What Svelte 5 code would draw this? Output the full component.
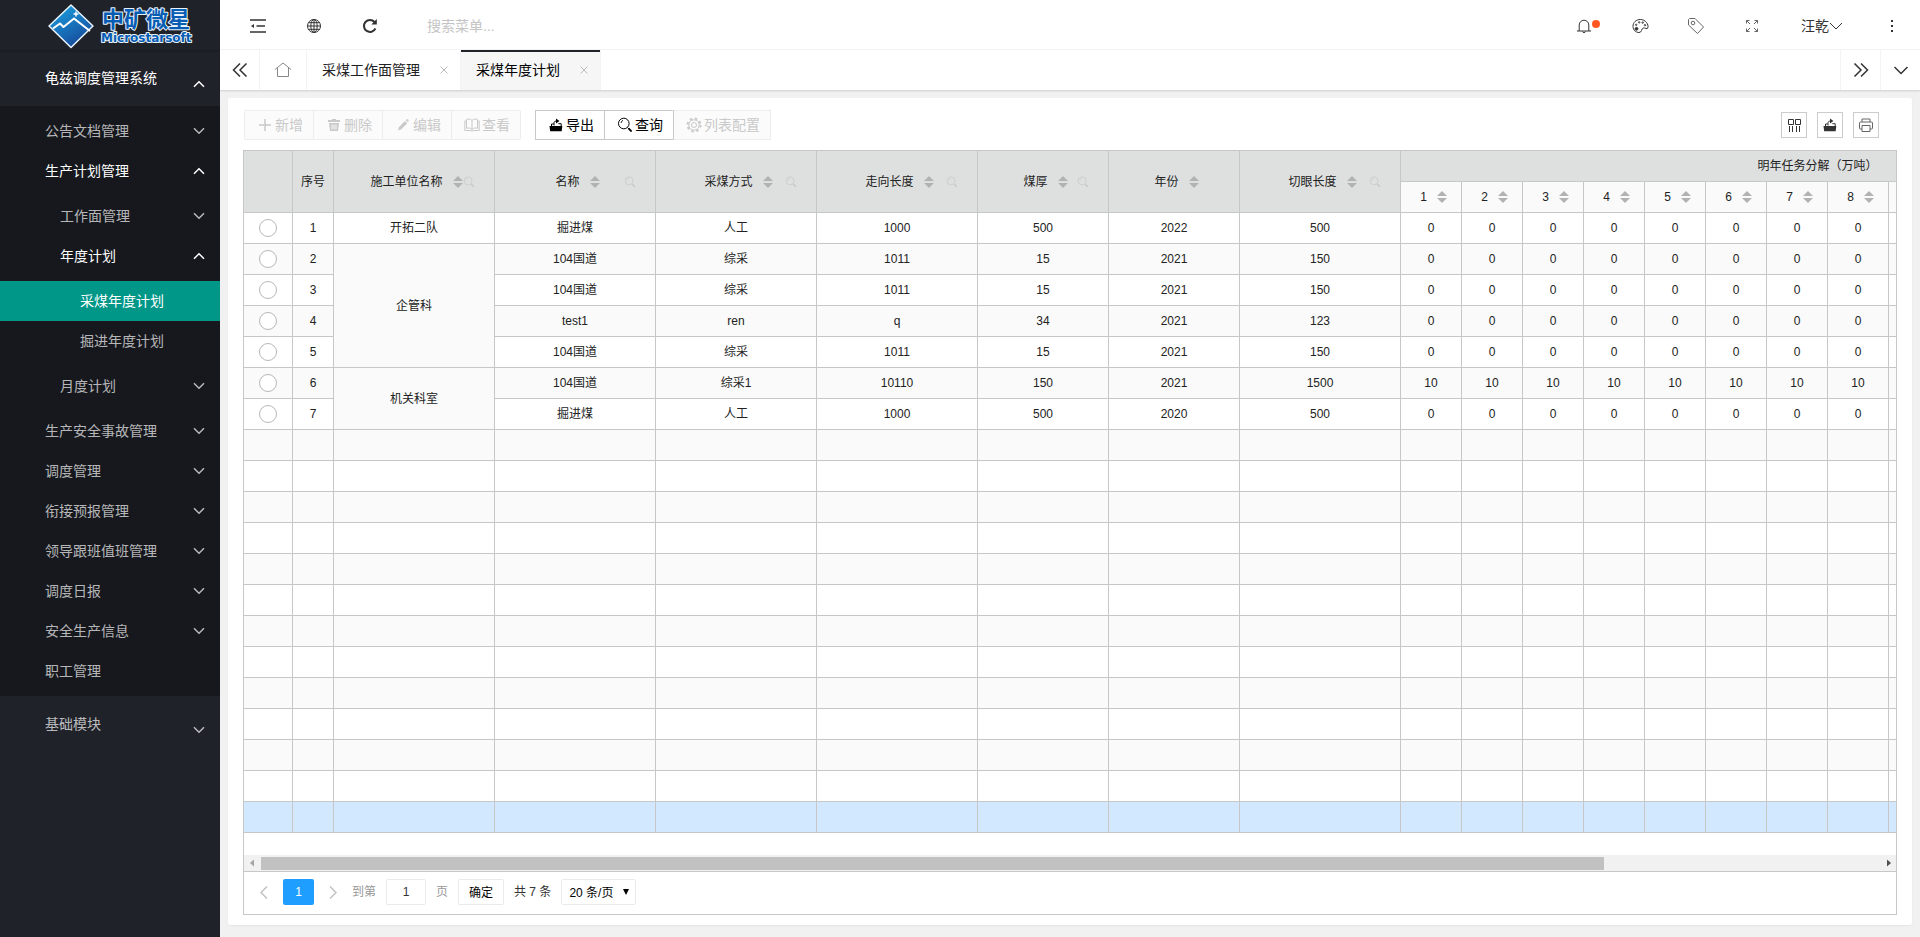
<script>
  const menu = [
    { label: '公告文档管理', state: 'closed' },
    {
      label: '生产计划管理', state: 'open', children: [
        { label: '工作面管理', state: 'closed' },
        {
          label: '年度计划', state: 'open', children: [
            { label: '采煤年度计划', state: 'leaf', active: true },
            { label: '掘进年度计划', state: 'leaf' }
          ]
        },
        { label: '月度计划', state: 'closed' }
      ]
    },
    { label: '生产安全事故管理', state: 'closed' },
    { label: '调度管理', state: 'closed' },
    { label: '衔接预报管理', state: 'closed' },
    { label: '领导跟班值班管理', state: 'closed' },
    { label: '调度日报', state: 'closed' },
    { label: '安全生产信息', state: 'closed' },
    { label: '职工管理', state: 'leaf' }
  ];

  const headers = [
    { label: '施工单位名称', search: true },
    { label: '名称', search: true },
    { label: '采煤方式', search: true },
    { label: '走向长度', search: true },
    { label: '煤厚', search: true },
    { label: '年份', search: false },
    { label: '切眼长度', search: true }
  ];
  const widths = [49, 41, 161, 161, 161, 161, 131, 131, 161, ...Array(12).fill(61), 102];
  const months = Array.from({ length: 12 }, (_, i) => i + 1);

  const rows = [
    { unit: '开拓二队', span: 1, cells: ['掘进煤', '人工', '1000', '500', '2022', '500'], plan: 0 },
    { unit: '企管科', span: 4, cells: ['104国道', '综采', '1011', '15', '2021', '150'], plan: 0 },
    { cells: ['104国道', '综采', '1011', '15', '2021', '150'], plan: 0 },
    { cells: ['test1', 'ren', 'q', '34', '2021', '123'], plan: 0 },
    { cells: ['104国道', '综采', '1011', '15', '2021', '150'], plan: 0 },
    { unit: '机关科室', span: 2, cells: ['104国道', '综采1', '10110', '150', '2021', '1500'], plan: 10 },
    { cells: ['掘进煤', '人工', '1000', '500', '2020', '500'], plan: 0 }
  ];
  const blanks = Array.from({ length: 13 }, (_, i) => i);
</script>

{#snippet chevron(up)}
  <svg class="chev" class:up width="12" height="8" viewBox="0 0 12 8"><path d="M1 1.2l5 5 5-5" /></svg>
{/snippet}

{#snippet items(list, level)}
  <ul class="sub">
    {#each list as item}
      <li>
        <a href="#menu" class="level{level}" class:open={item.state === 'open'} class:active={item.active}>
          <span>{item.label}</span>
          {#if item.state !== 'leaf'}{@render chevron(item.state === 'open')}{/if}
        </a>
        {#if item.children}{@render items(item.children, level + 1)}{/if}
      </li>
    {/each}
  </ul>
{/snippet}

{#snippet sorter()}
  <button class="sort" aria-label="排序"><i class="asc"></i><i class="desc"></i></button>
{/snippet}

{#snippet lens(size)}
  <svg class="line" width={size} height={size} viewBox="0 0 16 16"><circle cx="6.8" cy="6.5" r="5.3" /><path d="M4.2 5.8c0-1.200.700-2 1.800-2.300M10.600 10.600l3.800 4" /><path d="M11.600 11.400l2.800 3" stroke-width="1.8" /></svg>
{/snippet}

{#snippet exporter()}
  <svg width="14" height="14" viewBox="0 0 14 14"><path d="M.5 8h12.800l-.6 5.200H1.200z" fill="currentColor" /><path d="M2.500 8V6h2.300M9.300 5.700h2.900V8M5 7.500V5.200c0-1.500.8-2.200 3-2.200" fill="none" stroke="currentColor" /><path d="M7 .5l3.400 2.600L7 5.500z" fill="currentColor" /></svg>
{/snippet}

<div class="app">
  <aside>
    <a class="logo" href="#home" aria-label="中矿微星">
      <svg width="158" height="49" viewBox="0 0 158 49">
        <defs>
          <linearGradient id="gem" x1="0" y1="0" x2="0.6" y2="1">
            <stop offset="0" stop-color="#1ba6e4" /><stop offset="1" stop-color="#164b9c" />
          </linearGradient>
        </defs>
        <path d="M32 5L54 26 32 47.500 10 26z" fill="url(#gem)" stroke="#e9f4fb" stroke-width="1.500" stroke-linejoin="round" />
        <path d="M14 28.500l7-5 3.500 3.500L35 18.500l16 12.500" fill="none" stroke="#fff" stroke-width="2" stroke-linejoin="round" />
        <path d="M37 11.500v5M34.500 14h5" stroke="#fff" stroke-width="1.500" />
        <text x="63" y="27" class="brand">中矿微星</text>
        <text x="62" y="42" class="brand-en">Microstarsoft</text>
      </svg>
    </a>
    <nav>
      <a href="#menu" class="root open"><span>龟兹调度管理系统</span>{@render chevron(true)}</a>
      {@render items(menu, 1)}
      <a href="#menu" class="root"><span>基础模块</span>{@render chevron(false)}</a>
    </nav>
  </aside>

  <div class="page">
    <header>
      <button aria-label="收起菜单"><svg class="line mid" width="16" height="14" viewBox="0 0 16 14"><path d="M0 1h16M6.500 7H15M0 13h16" /><path d="M1 7l3-2v4z" fill="currentColor" stroke="none" /></svg></button>
      <button aria-label="网站"><svg class="line" width="16" height="16" viewBox="0 0 16 16"><circle cx="8" cy="8" r="6.500" /><ellipse cx="8" cy="8" rx="3.200" ry="6.500" /><path d="M8 1.500v13M1.500 8h13M2.500 4.700h11M2.500 11.300h11" /></svg></button>
      <button aria-label="刷新"><svg class="line bold" width="16" height="16" viewBox="0 0 16 16"><path d="M13.400 10.500A6 6 0 1 1 12.500 4" /><path d="M14.800 1v5.500H9.300z" fill="currentColor" stroke="none" /></svg></button>
      <input class="menu-search" type="text" placeholder="搜索菜单..." aria-label="搜索菜单" />
      <span class="grow"></span>
      <button class="bell" aria-label="消息"><svg class="line" width="16" height="16" viewBox="0 0 16 16"><path d="M1 13h14M3.200 13V7a4.800 4.800 0 0 1 9.600 0v6M6.500 13.500c.3 1.500 2.700 1.500 3 0" /></svg><i></i></button>
      <button aria-label="主题"><svg class="line" width="17" height="16" viewBox="0 0 17 16"><path d="M8.500 1.500C4 1.500 1 4.500 1 8.400 1 12 3.800 14.500 7 14.500c3.200 0 2-3.700 4.300-4.500 1.800-.6 3.700 1.800 4.500 0C17 6.500 13.500 1.500 8.500 1.500z" /><circle cx="4.500" cy="10.800" r="1.400" fill="currentColor" /><circle cx="4.200" cy="6.800" r=".7" /><circle cx="7.200" cy="4.400" r=".7" /><circle cx="10.700" cy="4.600" r=".7" /><circle cx="13" cy="7.200" r=".7" /></svg></button>
      <button class="soft" aria-label="便签"><svg class="line" width="18" height="18" viewBox="0 0 18 18"><path d="M1.500 2.500l1-1H8l8.500 8.500-6 6.500-9-8.500z" /><circle cx="6" cy="6" r="1.800" /></svg></button>
      <button class="soft" aria-label="全屏"><svg class="line" width="14" height="14" viewBox="0 0 14 14"><path d="M1.500 4.500v-3h3M1.500 1.500l3.500 3.500M9.500 1.500h3v3M12.500 1.500L9 5M1.500 9.500v3h3M1.500 12.500L5 9M9.500 12.500h3v-3M12.500 12.500L9 9" /></svg></button>
      <button class="user">汪乾<svg class="line" width="14" height="8" viewBox="0 0 14 8"><path d="M1 1l6 6 6-6" /></svg></button>
      <button aria-label="更多"><svg width="4" height="14" viewBox="0 0 4 14"><path d="M1 1h2v2H1zM1 6h2v2H1zM1 11h2v2H1z" fill="currentColor" /></svg></button>
    </header>

    <div class="tabs">
      <button class="arrow" aria-label="向左"><svg class="line mid" width="16" height="14" viewBox="0 0 16 14"><path d="M8 .5L1.500 7 8 13.500M14.500 .5L8 7l6.500 6.500" /></svg></button>
      <a class="home" href="#home" aria-label="主页"><svg class="line" width="18" height="16" viewBox="0 0 18 16"><path d="M1 7.500L9 1l8 6.500M3.500 6v8.500h11V6" /></svg></a>
      <a class="tab" href="#face">采煤工作面管理<svg class="line" width="8" height="8" viewBox="0 0 8 8"><path d="M.5 .5l7 7M7.500 .5l-7 7" /></svg></a>
      <a class="tab current" href="#year">采煤年度计划<svg class="line" width="8" height="8" viewBox="0 0 8 8"><path d="M.5 .5l7 7M7.500 .5l-7 7" /></svg></a>
      <span class="grow"></span>
      <button class="arrow edge" aria-label="向右"><svg class="line mid" width="16" height="14" viewBox="0 0 16 14"><path d="M1.500 .5L8 7l-6.500 6.500M8 .5L14.500 7 8 13.500" /></svg></button>
      <button class="arrow edge" aria-label="标签操作"><svg class="line mid" width="14" height="9" viewBox="0 0 14 9"><path d="M.5 1L7 7.500 13.500 1" /></svg></button>
    </div>

    <main>
      <div class="toolbar">
        <div class="group">
          <button class="tool" disabled><svg class="line mid" width="14" height="14" viewBox="0 0 14 14"><path d="M7 1v12M1 7h12" /></svg>新增</button>
          <button class="tool" disabled><svg width="14" height="14" viewBox="0 0 14 14"><path d="M5 1h4v1h4v2H1V2h4zM2 5h10l-1 8H3z" fill="currentColor" /><path d="M5 6.500v5M7 6.500v5M9 6.500v5" stroke="#fbfbfb" /></svg>删除</button>
          <button class="tool" disabled><svg width="14" height="14" viewBox="0 0 14 14"><path d="M2 12.500l1-3.500 6-6 2.300 2.300-6 6zM9.700 2.300l1-1q.8-.4 1.500.3t.4 1.500l-.8 1z" fill="currentColor" /></svg>编辑</button>
          <button class="tool" disabled><svg class="line" width="16" height="14" viewBox="0 0 16 14"><path d="M8 2.500C6.500.8 4 .8 2.500 1.500v8.800c1.800-.6 4-.4 5.500 1 1.500-1.400 3.700-1.600 5.500-1V1.500C12 .8 9.500.8 8 2.500v8.800M2.500 3H.8v9.500H7l1 .8 1-.8h6.200V3h-1.700" /></svg>查看</button>
        </div>
        <div class="group">
          <button class="tool">{@render exporter()}导出</button>
          <button class="tool">{@render lens(16)}查询</button>
          <button class="tool wide" disabled><svg class="line" width="16" height="16" viewBox="0 0 16 16"><circle cx="8" cy="8" r="2.500" /><circle cx="8" cy="8" r="5.200" /><circle cx="8" cy="8" r="6.500" stroke-width="2" stroke-dasharray="2.500 2.600" /></svg>列表配置</button>
        </div>
        <span class="grow"></span>
        <div class="mini">
          <button aria-label="筛选列"><svg class="line" width="14" height="14" viewBox="0 0 14 14"><path d="M1.500 1.500h5v5h-5zM8.500 1.500h5v5h-5zM2.500 8v6M5.500 8v6M9.500 8v6M12.500 8v6" /></svg></button>
          <button aria-label="导出">{@render exporter()}</button>
          <button class="soft" aria-label="打印"><svg class="line" width="14" height="14" viewBox="0 0 14 14"><path d="M3 4V1h8v3M3 11H1.500q-1 0-1-1V5q0-1 1-1h11q1 0 1 1v5q0 1-1 1H11M3 7.500h8v6H3z" /></svg></button>
        </div>
      </div>

      <div class="grid">
        <div class="scroll">
          <table>
            <colgroup>{#each widths as w}<col style="width:{w}px" />{/each}</colgroup>
            <thead>
              <tr>
                <th rowspan="2"></th>
                <th rowspan="2">序号</th>
                {#each headers as h}
                  <th rowspan="2">
                    <div class="head"><span>{h.label}</span>{@render sorter()}
                      {#if h.search}<button class="find" aria-label="搜索{h.label}">{@render lens(12)}</button>{/if}
                    </div>
                  </th>
                {/each}
                <th colspan="13">明年任务分解（万吨）</th>
              </tr>
              <tr class="months">
                {#each months as m}<th><div class="head"><span>{m}</span>{@render sorter()}</div></th>{/each}
                <th></th>
              </tr>
            </thead>
            <tbody>
              {#each rows as row, i}
                <tr>
                  <td><input type="radio" name="plan" aria-label="选择第{i + 1}行" /></td>
                  <td>{i + 1}</td>
                  {#if row.unit}<td rowspan={row.span}>{row.unit}</td>{/if}
                  {#each row.cells as c}<td>{c}</td>{/each}
                  {#each months as m}<td>{row.plan}</td>{/each}
                  <td></td>
                </tr>
              {/each}
              {#each blanks as b}
                <tr class:selected={b === blanks.length - 1}>{#each widths as w}<td></td>{/each}</tr>
              {/each}
            </tbody>
          </table>
        </div>
        <div class="hbar">
          <svg width="17" height="16" viewBox="0 0 17 16"><path d="M10 4.500v7L6 8z" fill="#a3a3a3" /></svg>
          <div class="track"><i></i></div>
          <svg width="17" height="16" viewBox="0 0 17 16"><path d="M8 4.500v7L12 8z" fill="#505050" /></svg>
        </div>
        <div class="pager">
          <button class="step" aria-label="上一页"><svg class="line mid" width="8" height="13" viewBox="0 0 8 13"><path d="M7 .5l-6 6 6 6" /></svg></button>
          <button class="num">1</button>
          <button class="step" aria-label="下一页"><svg class="line mid" width="8" height="13" viewBox="0 0 8 13"><path d="M1 .5l6 6-6 6" /></svg></button>
          <label class="jump">到第<input type="text" value="1" />页</label>
          <button class="ok">确定</button>
          <span class="total">共 7 条</span>
          <div class="size">
            <select aria-label="每页条数"><option>20 条/页</option></select>
            <svg width="8" height="8" viewBox="0 0 8 8"><path d="M1 1h6L4 7z" fill="#000" /></svg>
          </div>
        </div>
      </div>
    </main>
  </div>
</div>

<style>
  :global(body) { margin: 0; background: #f1f1f1; }
  .app {
    display: flex; min-height: 100vh; color: #333;
    font: 14px/20px "Liberation Sans", "Noto Sans CJK SC", sans-serif;
  }
  * { box-sizing: border-box; }
  a { color: inherit; text-decoration: none; }
  button, input, select { font: inherit; color: inherit; margin: 0; padding: 0; border: 0; background: none; outline: 0; }
  ul { list-style: none; margin: 0; padding: 0; }
  svg { flex: none; display: block; }
  .grow { flex: 1; }
  .line { fill: none; stroke: currentColor; stroke-width: 1; }
  .line.bold { stroke-width: 2; }
  .line.mid { stroke-width: 1.5; }

  aside { flex: none; width: 220px; background: #20222a; color: rgba(255, 255, 255, .7); }
  .logo { display: flex; height: 50px; padding-left: 39px; box-shadow: 0 1px 2px rgba(0, 0, 0, .25); }
  .brand, .brand-en { fill: #075db3; stroke: #e8f2fb; stroke-width: 2px; paint-order: stroke; font-weight: 700; stroke-linejoin: round; }
  .brand { font-size: 22px; }
  .brand-en { font-family: "DejaVu Sans", sans-serif; font-size: 12px; }
  nav a { display: flex; align-items: center; justify-content: space-between; height: 40px; padding: 0 15px 0 45px; }
  nav .root { height: 56px; }
  nav .root .chev { margin-top: 12px; }
  nav a.open, nav a.active { color: #fff; }
  nav a.level2 { padding-left: 60px; }
  nav a.level3 { padding-left: 80px; }
  nav a.active { background: #009688; }
  .sub { padding: 5px 0; }
  nav > .sub { background: #16181d; border-radius: 2px; }
  .chev { fill: none; stroke: currentColor; stroke-width: 1.5; }
  .chev.up { transform: rotate(180deg); }

  .page { flex: 1; min-width: 0; display: flex; flex-direction: column; }
  header { display: flex; height: 50px; padding: 2px 0 0 10px; background: #fff; border-bottom: 1px solid #f6f6f6; }
  header button { display: flex; align-items: center; justify-content: center; width: 56px; }
  .menu-search { width: 180px; margin-left: 29px; }
  .menu-search::placeholder { color: #c4c4c4; opacity: 1; }
  .bell { position: relative; }
  .bell i { position: absolute; left: 36px; top: 18px; width: 8px; height: 8px; border-radius: 50%; background: #ff5722; }
  header .user { width: 84px; white-space: nowrap; }
  .soft { color: #666; }

  .tabs { display: flex; height: 40px; background: #fff; box-shadow: 0 1px 2px rgba(0, 0, 0, .15); position: relative; }
  .arrow { display: flex; align-items: center; justify-content: center; width: 40px; border-right: 1px solid #f3f3f3; }
  .arrow.edge { border-right: 0; border-left: 1px solid #f3f3f3; }
  .home { display: flex; align-items: center; justify-content: center; width: 47px; border-right: 1px solid #f3f3f3; color: #888; }
  .tab { display: flex; align-items: center; padding: 0 12px 0 15px; border-right: 1px solid #f3f3f3; color: #222; }
  .tab svg { margin-left: 20px; color: #bbb; }
  .tab.current { background: #f6f6f6; box-shadow: inset 0 2px #20222a; color: #000; }

  main { flex: 1; display: flex; flex-direction: column; margin: 8px 8px 12px; padding: 12px 15px 10px; background: #fff; border-radius: 2px; box-shadow: 0 1px 2px rgba(0, 0, 0, .05); }
  .toolbar { display: flex; align-items: center; margin-bottom: 10px; }
  .group { display: flex; margin: 0 14px 0 1px; border: 1px solid #ededed; border-left: 0; border-radius: 2px; }
  .group + .group { border: 0; margin-left: 0; }
  .tool { display: flex; align-items: center; justify-content: flex-end; width: 69px; height: 28px; padding-right: 10px; border-left: 1px solid #ededed; color: #000; white-space: nowrap; }
  .group + .group .tool { height: 30px; border: 1px solid #c9c9c9; border-right: 0; }
  .group + .group .tool.wide { width: 98px; border: 1px solid #ededed; border-left-color: #c9c9c9; }
  .tool svg { margin-right: 3px; }
  .tool .line[width="16"] { margin-right: 2px; }
  .tool:disabled { background: #fbfbfb; color: #c9c9c9; }
  .mini { display: flex; gap: 10px; padding-right: 18px; }
  .mini button { display: flex; align-items: center; justify-content: center; width: 26px; height: 26px; border: 1px solid #ccc; }

  .grid { flex: 1; display: flex; flex-direction: column; min-width: 0; border: 1px solid #c7c7c7; }
  .scroll { flex: 1; overflow-x: auto; overflow-y: hidden; scrollbar-width: none; contain: inline-size; }
  table { width: 1990px; table-layout: fixed; border-collapse: separate; border-spacing: 0; font-size: 12px; color: #222; }
  th, td { height: 31px; padding: 0; border: 0 solid #c7c7c7; border-width: 0 1px 1px 0; text-align: center; font-weight: 400; line-height: 20px; white-space: nowrap; }
  th { background: #dee0df; }
  .months th { background: #fafafa; }
  tbody tr:nth-child(even) td { background: #fafafa; }
  tbody tr.selected td { background: #d2e8ff; }
  .head { position: relative; display: flex; align-items: center; justify-content: center; }
  .sort { display: flex; flex-direction: column; gap: 2px; margin: 0 -5px 0 10px; width: 10px; }
  .sort i { border: 5px solid transparent; }
  .sort .asc { border-top: 0; border-bottom-color: #b2b2b2; }
  .sort .desc { border-bottom: 0; border-top-color: #b2b2b2; }
  .find { position: absolute; right: 19px; top: 4px; color: #c6c8c7; }
  td input { display: block; appearance: none; width: 18px; height: 18px; margin: 0 auto; border: 1px solid #b8b8b8; border-radius: 50%; background: #fff; }

  .hbar { display: flex; height: 16px; background: #f1f1f1; }
  .track { flex: 1; padding: 2px 0 1px; }
  .track i { display: block; width: 83%; height: 13px; background: #c1c1c1; }
  .pager { display: flex; height: 43px; padding: 7px 0 9px 10px; border-top: 1px solid #c7c7c7; font-size: 12px; line-height: 26px; }
  .step { display: flex; align-items: center; justify-content: center; width: 20px; color: #c2c2c2; }
  .num { width: 31px; height: 26px; margin: 0 9px; border-radius: 2px; background: #1e9fff; color: #fff; }
  .jump { margin-left: 9px; color: #999; }
  .jump input { width: 40px; height: 26px; margin: 0 10px; border: 1px solid #eaeaea; border-radius: 2px; text-align: center; color: #333; vertical-align: top; }
  .ok { width: 46px; height: 26px; margin: 0 10px; border: 1px solid #eaeaea; border-radius: 2px; color: #000; }
  .size { position: relative; margin-left: 10px; height: 26px; }
  .size select { appearance: none; width: 75px; height: 26px; padding-left: 7px; border: 1px solid #eaeaea; border-radius: 2px; color: #000; }
  .size svg { position: absolute; right: 6px; top: 9px; }
</style>
